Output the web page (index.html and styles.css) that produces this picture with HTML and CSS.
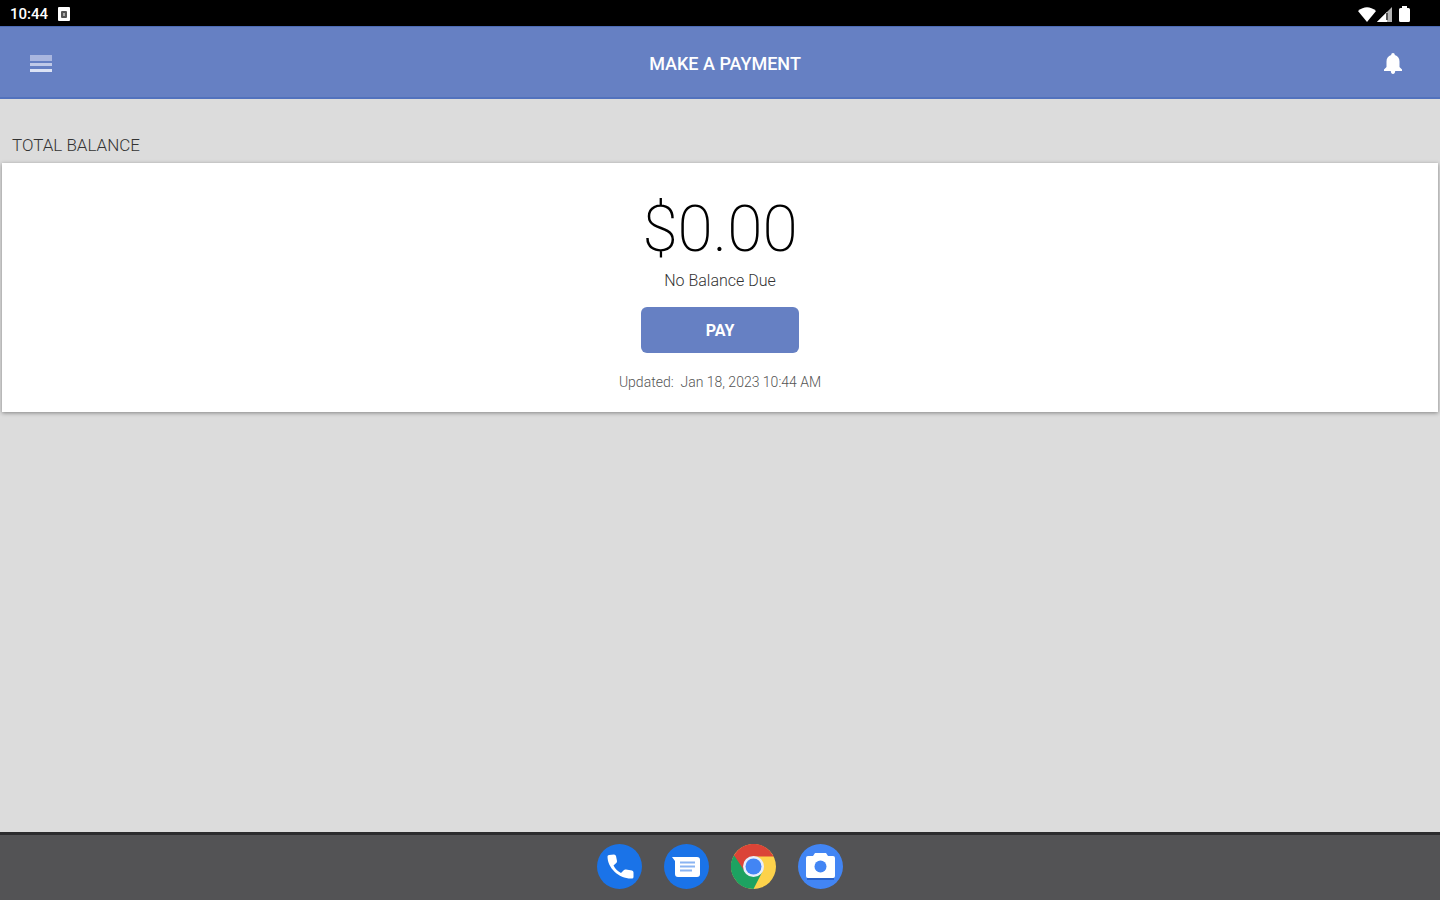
FILE: index.html
```
<!DOCTYPE html>
<html lang="en">
<head>
    <meta charset="UTF-8">
    <meta name="viewport" content="width=device-width, initial-scale=1.0">
    <title>Make a Payment</title>
    <link rel="stylesheet" href="styles.css">
</head>
<body>
    <div class="status-bar">
        <div class="status-group">
            <span class="clock">10:44</span>
            <svg class="app-icon" width="12" height="14" viewBox="0 0 12 14" aria-hidden="true">
                <rect width="12" height="14" rx="1" fill="#fff"/>
                <rect x="3" y="4" width="6" height="7" rx="1" fill="#555"/>
                <rect x="5" y="6" width="2" height="3" fill="#aaa"/>
            </svg>
        </div>
        <div class="status-group status-right">
            <svg width="18" height="15" viewBox="0 0 18 15" aria-hidden="true">
                <path d="M0 4 Q9 -3.500 18 4 L9 15 Z" fill="#fff"/>
            </svg>
            <svg width="15" height="15" viewBox="0 0 15 15" aria-hidden="true">
                <path d="M0 15 L15 0 V15 Z" fill="#fff" fill-opacity="0.7"/>
                <path d="M0 15 L10 5 V15 Z" fill="#fff"/>
                <path d="M10 6 V13" stroke="#555" stroke-width="2"/>
            </svg>
            <svg class="battery" width="11" height="16" viewBox="0 0 11 16" aria-hidden="true">
                <path d="M3 0 H8 V2 H9.500 Q11 2 11 3.500 V14.500 Q11 16 9.500 16 H1.500 Q0 16 0 14.500 V3.500 Q0 2 1.500 2 H3 Z" fill="#fff"/>
            </svg>
        </div>
    </div>

    <header class="header">
        <button class="icon-button" type="button" aria-label="Menu">
            <svg width="22" height="18" viewBox="0 0 22 18" aria-hidden="true">
                <rect width="22" height="6" fill="#a9b6df"/>
                <rect y="8" width="22" height="3" fill="#c0cae8"/>
                <rect y="14" width="22" height="3" fill="#dce3f5"/>
            </svg>
        </button>
        <h1>MAKE A PAYMENT</h1>
        <button class="icon-button" type="button" aria-label="Notifications">
            <svg width="18" height="21" viewBox="0 0 18 21" aria-hidden="true">
                <path d="M9 0 C10.200 0 10.800 .8 10.800 2 C14 2.800 15.500 5.500 15.500 8.500 V14 L18 16.500 V18 H0 V16.500 L2.500 14 V8.500 C2.500 5.500 4 2.800 7.200 2 C7.200 .8 7.800 0 9 0 Z M6.800 18 H11.200 C11.200 20 10.200 21 9 21 C7.800 21 6.800 20 6.800 18 Z" fill="#fff"/>
            </svg>
        </button>
    </header>

    <main class="content">
        <h2>TOTAL BALANCE</h2>
        <section class="balance-card">
            <div class="amount">$0.00</div>
            <p class="due">No Balance Due</p>
            <button class="pay-button" type="button">PAY</button>
            <p class="updated">Updated:&nbsp; Jan 18, 2023 10:44 AM</p>
        </section>
    </main>

    <nav class="dock">
        <button class="dock-button" type="button" aria-label="Phone">
            <svg width="45" height="45" viewBox="0 0 45 45" aria-hidden="true">
                <circle cx="22.500" cy="22.500" r="22.500" fill="#1a73e8"/>
                <path d="M12 11 L17 10.500 Q18.500 10.500 19 12 L20 17 Q20 18 19.500 18.700 L16.500 21.500 Q19 26.500 24 29 L27 26 Q27.700 25.200 29 25.500 L35 26.500 Q36.500 27 36.500 28.500 V33 Q36.500 34.500 35 34.500 C22 35 10.500 24 10.500 12.500 Q10.500 11 12 11 Z" fill="#fff"/>
            </svg>
        </button>
        <button class="dock-button" type="button" aria-label="Messages">
            <svg width="45" height="45" viewBox="0 0 45 45" aria-hidden="true">
                <circle cx="22.500" cy="22.500" r="22.500" fill="#1a73e8"/>
                <path d="M8 13 H33 Q36 13 36 16 V30 Q36 33 33 33 H14 Q11 33 11 30 V17 Z" fill="#fff"/>
                <path d="M16 18.500 H31 M16 22.500 H31 M16 26.500 H28" stroke="#8ab4f2" stroke-width="2"/>
            </svg>
        </button>
        <button class="dock-button" type="button" aria-label="Chrome">
            <svg width="45" height="45" viewBox="0 0 45 45" aria-hidden="true">
                <circle cx="22.500" cy="22.500" r="22.500" fill="#fdd24b"/>
                <path d="M22.500 22.500 L31.500 27.500 L22.500 45 A22.500 22.500 0 0 1 3 11.200 Z" fill="#1da261"/>
                <path d="M22.500 12.500 H42.700 A22.500 22.500 0 0 0 3 11.200 L13.500 27 Z" fill="#db4437"/>
                <circle cx="22.500" cy="22.500" r="10.500" fill="#e8eefa"/>
                <circle cx="22.500" cy="22.500" r="8" fill="#4285f4"/>
            </svg>
        </button>
        <button class="dock-button" type="button" aria-label="Camera">
            <svg width="45" height="45" viewBox="0 0 45 45" aria-hidden="true">
                <circle cx="22.500" cy="22.500" r="22.500" fill="#4285f4"/>
                <path d="M9 34 H36 V36 H9 Z" fill="#2a62c9"/>
                <path d="M10 12 H15 L17 9 H28 L30 12 H35 Q37 12 37 14 V32 Q37 34 35 34 H10 Q8 34 8 32 V14 Q8 12 10 12 Z" fill="#fff"/>
                <circle cx="22.500" cy="22.500" r="6" fill="#4285f4"/>
            </svg>
        </button>
    </nav>
</body>
</html>
```
FILE: styles.css
```
* {
    box-sizing: border-box;
    margin: 0;
    padding: 0;
}

body {
    display: flex;
    flex-direction: column;
    min-height: 100vh;
    font-family: Roboto, sans-serif;
    background-color: #dcdcdc;
    color: #333;
}

button {
    border: none;
    background: none;
    font-family: inherit;
    cursor: pointer;
}

svg {
    display: block;
}

.status-bar {
    display: flex;
    justify-content: space-between;
    align-items: center;
    height: 26px;
    padding: 2px 30px 0 10px;
    background-color: #000;
    color: #fff;
}

.status-group {
    display: flex;
    align-items: center;
    gap: 10px;
}

.status-right {
    gap: 1px;
}

.battery {
    margin-left: 6px;
}

.clock {
    font-size: 15px;
    font-weight: 500;
}

.header {
    display: flex;
    align-items: center;
    height: 73px;
    padding: 3px 38px 0 30px;
    background-color: #6680c3;
    border-top: 1px solid #4c6bb5;
    border-bottom: 2px solid #5272bd;
    color: #fff;
}

.header h1 {
    flex: 1;
    padding-left: 14px;
    font-size: 18px;
    font-weight: 500;
    line-height: 24px;
    text-align: center;
}

.content {
    flex: 1;
    padding-top: 34px;
}

.content h2 {
    padding: 0 12px;
    font-size: 17px;
    font-weight: 300;
    line-height: 24px;
    margin-bottom: 6px;
}

.balance-card {
    display: flex;
    flex-direction: column;
    align-items: center;
    margin: 0 2px;
    padding: 32px 16px 20px;
    background-color: #fff;
    box-shadow: 0 1px 4px rgba(0, 0, 0, 0.4);
}

.amount {
    font-size: 64px;
    font-weight: 200;
    line-height: 70px;
    color: #000;
}

.due {
    margin-top: 4px;
    font-size: 16px;
    font-weight: 300;
    line-height: 24px;
}

.pay-button {
    width: 158px;
    height: 46px;
    margin-top: 14px;
    border-radius: 6px;
    background-color: #6680c3;
    color: #fff;
    font-size: 16px;
    font-weight: 700;
}

.updated {
    margin-top: 19px;
    font-size: 14px;
    font-weight: 300;
    line-height: 20px;
    color: #555;
}

.dock {
    display: flex;
    justify-content: center;
    align-items: center;
    gap: 22px;
    height: 68px;
    padding-bottom: 2px;
    background-color: #535355;
    border-top: 3px solid #2c2c2e;
}

.dock-button {
    border-radius: 50%;
}
```
